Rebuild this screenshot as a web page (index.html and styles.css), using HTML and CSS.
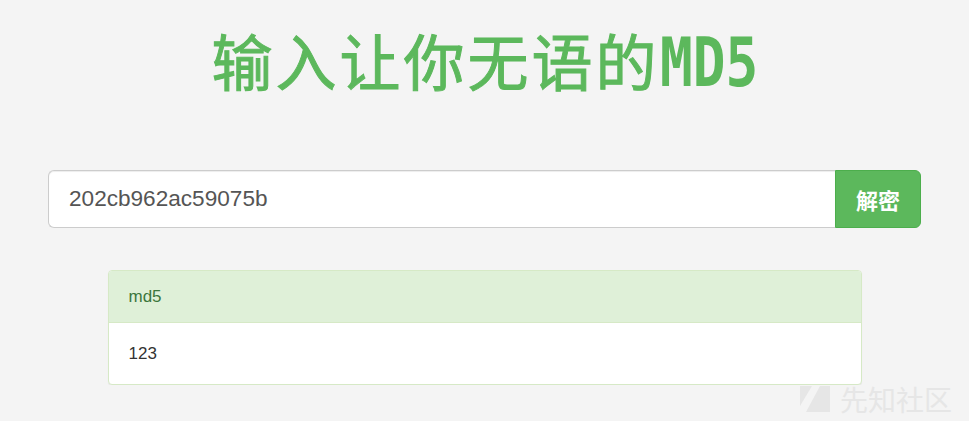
FILE: index.html
```html
<!DOCTYPE html>
<html lang="zh-CN">
  <head>
    <meta charset="UTF-8" />
    <meta name="viewport" content="width=device-width, initial-scale=1.0" />
    <title>MD5</title>
    <link rel="stylesheet" href="styles.css">
  </head>
  <body>
    <div class="page">
      <h1 class="title"><span class="title__cjk">输入让你无语的</span><span class="title__latin">MD5</span></h1>

      <form class="search">
        <input class="search__input" type="text" value="202cb962ac59075b" />
        <button class="search__btn" type="button">解密</button>
      </form>

      <div class="panel">
        <div class="panel__heading">md5</div>
        <div class="panel__body">123</div>
      </div>
    </div>

    <div class="watermark">
      <svg class="watermark__logo" width="30" height="30" viewBox="0 0 30 30">
        <path d="M0 2 H12 L0 22 Z" fill="#e6e6e6" />
        <path d="M20 2 H30 V28 H6 Z" fill="#e6e6e6" />
      </svg>
      <span>先知社区</span>
    </div>
  </body>
</html>
```

FILE: styles.css
```css
* {
  box-sizing: border-box;
}

body {
  margin: 0;
  background-color: #f4f4f4;
  font-family: "Liberation Sans", Arial, "Noto Sans CJK SC", sans-serif;
  color: #333;
}

.page {
  width: 873px;
  margin: 0 auto;
  padding-top: 22px;
}

.title {
  height: 76px;
  margin: 0;
  text-align: center;
  font-weight: 400;
  line-height: 76px;
  color: #5cb85c;
  white-space: nowrap;
}

.title__cjk {
  font-family: "Noto Sans CJK SC", sans-serif;
  font-size: 61px;
  letter-spacing: 3px;
  -webkit-text-stroke: 1px #5cb85c;
}

/* narrow, tall digits like a heiti font's latin half */
.title__latin {
  display: inline-block;
  margin-right: -25px;
  font-family: "DejaVu Sans Mono", monospace;
  font-size: 68px;
  font-weight: 700;
  line-height: 50px;
  transform: scaleX(0.8);
  transform-origin: left;
}

.search {
  display: flex;
  margin: 72px 0 0;
  height: 58px;
}

.search__input {
  flex: 1;
  min-width: 0;
  height: 100%;
  padding: 0 20px;
  border: 1px solid #ccc;
  border-right: 0;
  border-radius: 6px 0 0 6px;
  background: #fff;
  font-family: "Liberation Sans", Arial, sans-serif;
  font-size: 22.6px;
  color: #555;
  outline: none;
  box-shadow: inset 0 1px 1px rgba(0, 0, 0, 0.075);
}

.search__btn {
  width: 86px;
  height: 100%;
  border: 1px solid #4cae4c;
  border-radius: 0 6px 6px 0;
  background-color: #5cb85c;
  font-family: "Noto Sans CJK SC", sans-serif;
  font-size: 22px;
  font-weight: 700;
  color: #fff;
  cursor: pointer;
}

.panel {
  width: 754px;
  margin: 42px auto 0;
  background: #fff;
  border: 1px solid #d6e9c6;
  border-radius: 4px;
  box-shadow: 0 1px 1px rgba(0, 0, 0, 0.05);
}

.panel__heading {
  height: 52px;
  padding: 0 20px;
  display: flex;
  align-items: center;
  background-color: #dff0d8;
  border-bottom: 1px solid #d6e9c6;
  border-radius: 3px 3px 0 0;
  font-size: 17px;
  color: #3c763d;
}

.panel__body {
  height: 61px;
  padding: 0 20px;
  display: flex;
  align-items: center;
  font-size: 17px;
}

/* site mark in the lower right corner */
.watermark {
  position: absolute;
  left: 800px;
  top: 384px;
  display: flex;
  align-items: center;
  gap: 10px;
  font-family: "Noto Sans CJK SC", sans-serif;
  font-size: 28px;
  line-height: 30px;
  color: #e6e6e6;
}
```
